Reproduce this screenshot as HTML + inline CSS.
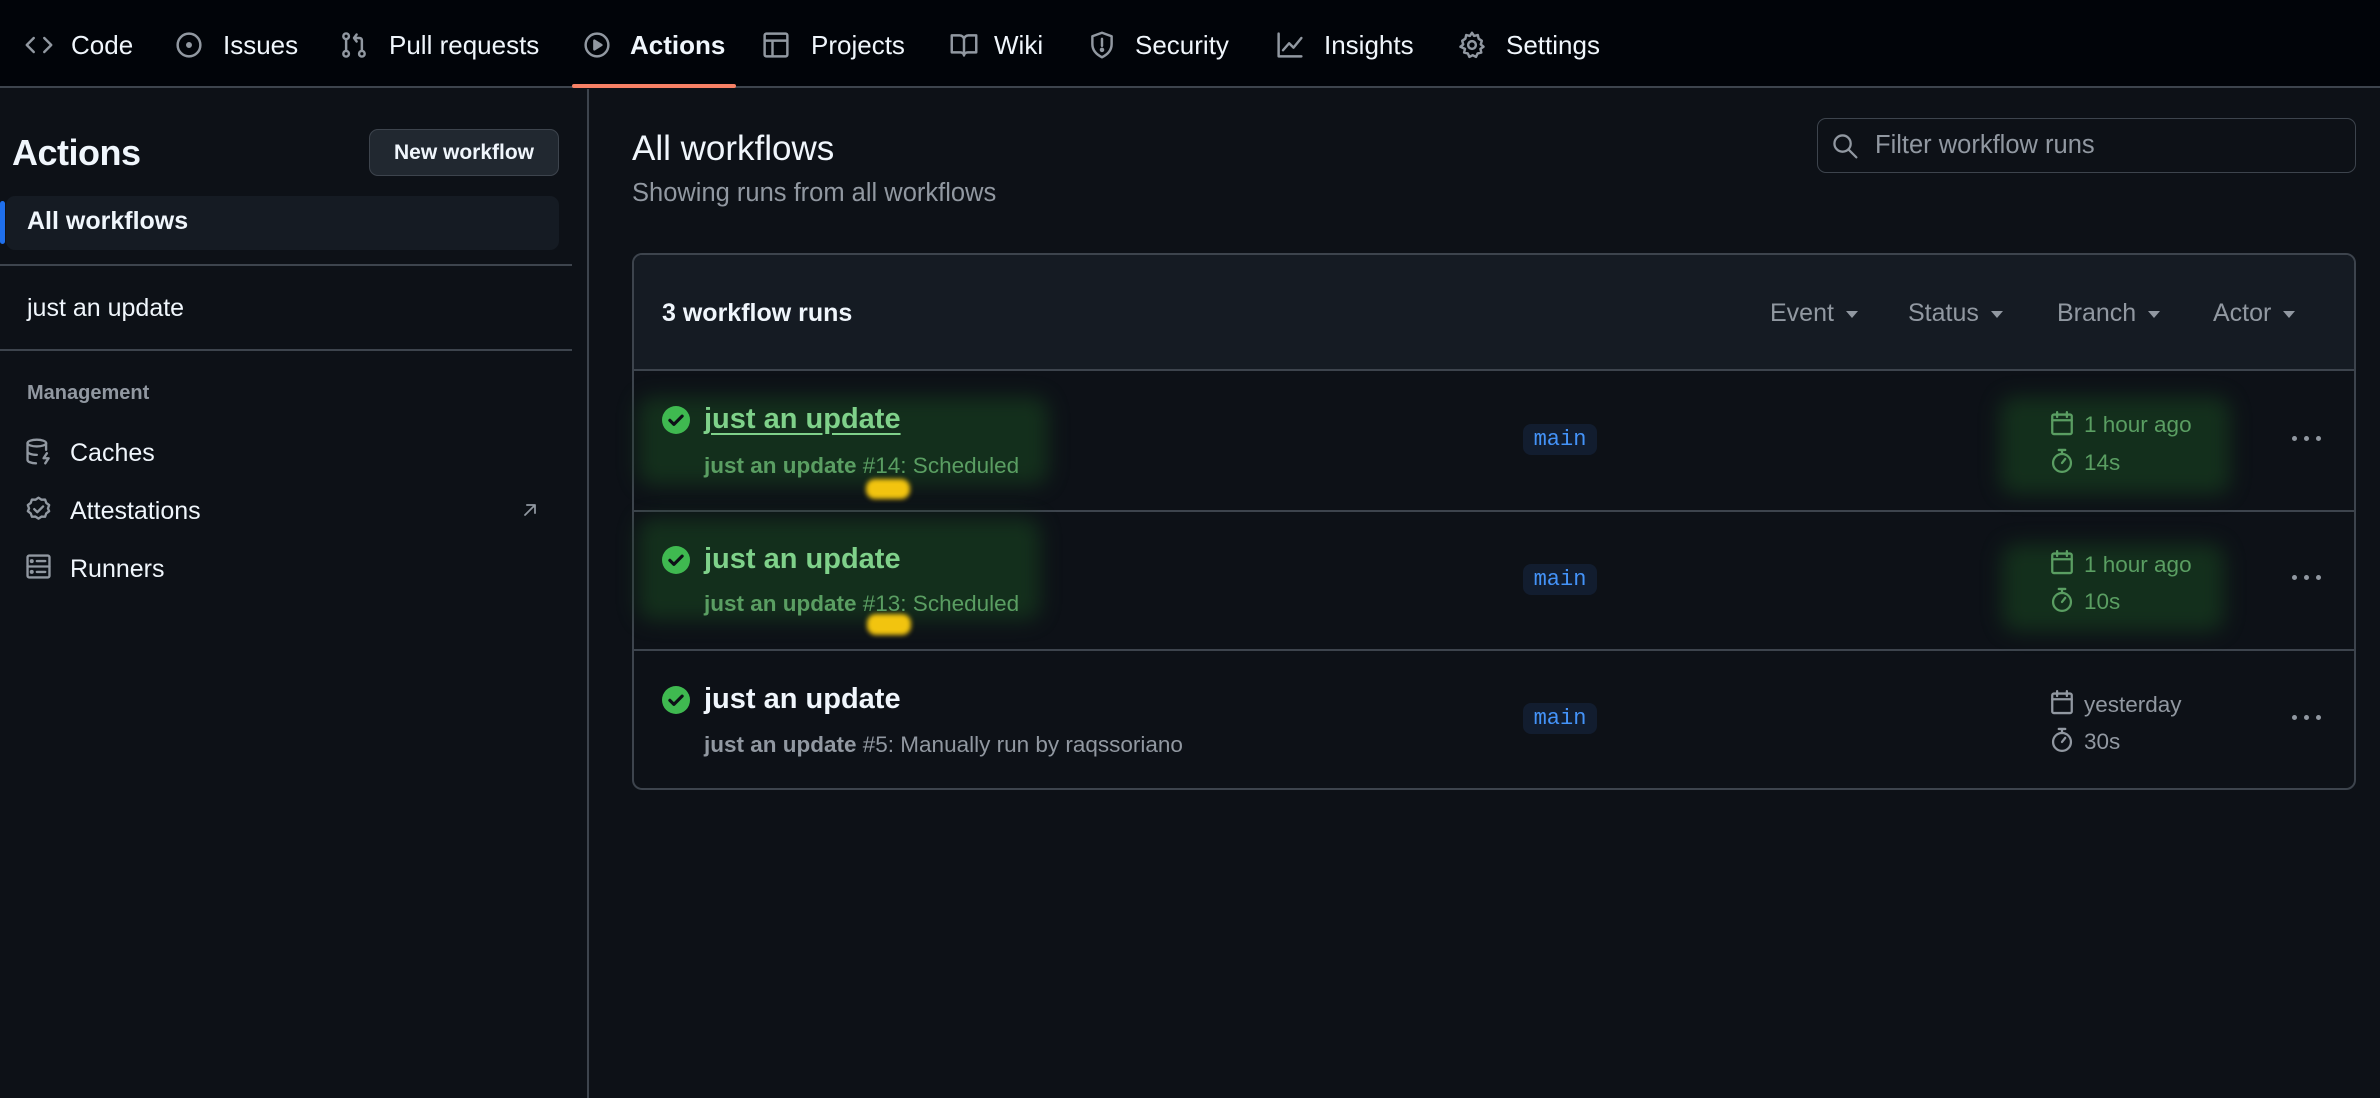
<!DOCTYPE html>
<html><head><meta charset="utf-8"><style>
*{margin:0;padding:0;box-sizing:border-box}
body{width:2380px;height:1098px;background:#0d1117;font-family:"Liberation Sans",sans-serif;color:#f0f6fc;position:relative;overflow:hidden}
.a{position:absolute;white-space:nowrap}
.nav{position:absolute;left:0;top:0;width:2380px;height:88px;background:#010409;border-bottom:2px solid #3d444d}
.ni{position:absolute;top:30px;font-size:26px;color:#f0f6fc;line-height:30px}
.ic{position:absolute;fill:none;stroke:#9198a1;stroke-width:1.4;stroke-linecap:round;stroke-linejoin:round}
.glow{position:absolute;background:#163a1e;filter:blur(10px);opacity:.75;border-radius:14px}
.badge{position:absolute;background:#121d2f;border-radius:8px;color:#4493f8;font-family:"Liberation Mono",monospace;font-size:22px;width:74px;height:31px;line-height:31px;text-align:center}
.dots{position:absolute;width:32px;height:6px}
.dots i{position:absolute;top:0;width:5px;height:5px;border-radius:50%;background:#9198a1}
.f{position:absolute;top:299px;font-size:25px;color:#9198a1}
.car{display:inline-block;border:6px solid transparent;border-top:7px solid #9198a1;border-bottom:0;margin-left:12px;vertical-align:middle}
.t{position:absolute;white-space:nowrap;font-size:29px;font-weight:bold}
.s{position:absolute;white-space:nowrap;font-size:22.5px}
</style></head><body>
<div class="nav"></div>
<svg class="ic" style="left:25px;top:31px" width="28" height="28" viewBox="0 0 16 16"><path d="M5 4L1 8l4 4M11 4l4 4-4 4"/></svg>
<div class="ni" style="left:71px">Code</div>
<svg class="ic" style="left:175px;top:31px" width="28" height="28" viewBox="0 0 16 16"><circle cx="8" cy="8" r="6.5"/><circle cx="8" cy="8" r="1" fill="#9198a1"/></svg>
<div class="ni" style="left:223px">Issues</div>
<svg class="ic" style="left:340px;top:31px" width="28" height="28" viewBox="0 0 16 16"><circle cx="3.5" cy="3" r="1.6"/><circle cx="3.5" cy="13" r="1.6"/><circle cx="12.5" cy="13" r="1.6"/><path d="M3.5 4.6v6.8M12.5 11.4V5.5c0-1-.5-1.5-1.5-1.5H8m1.5-2L8 4l1.5 2"/></svg>
<div class="ni" style="left:389px">Pull requests</div>
<svg class="ic" style="left:583px;top:31px" width="28" height="28" viewBox="0 0 16 16"><circle cx="8" cy="8" r="6.5"/><path d="M6.5 5.5v5l4-2.5z" fill="#9198a1"/></svg>
<div class="ni" style="left:630px;font-weight:bold">Actions</div>
<div class="a" style="left:572px;top:84px;width:164px;height:4px;background:#f78166;border-radius:2px"></div>
<svg class="ic" style="left:762px;top:31px" width="28" height="28" viewBox="0 0 16 16"><rect x="1.5" y="1.5" width="13" height="13" rx="1"/><path d="M1.5 5.5h13M6 5.5v9"/></svg>
<div class="ni" style="left:811px">Projects</div>
<svg class="ic" style="left:949px;top:31px" width="30" height="28" viewBox="0 0 16 16"><path d="M1 2.5h4.5c1.3 0 2.5 1 2.5 2.3V14c0-1-1-1.8-2.2-1.8H1zM15 2.5h-4.5C9.2 2.5 8 3.5 8 4.8V14c0-1 1-1.8 2.2-1.8H15z"/></svg>
<div class="ni" style="left:994px">Wiki</div>
<svg class="ic" style="left:1088px;top:31px" width="28" height="28" viewBox="0 0 16 16"><path d="M8 1l5.5 2v4.5c0 3.5-2.5 6-5.5 7.5-3-1.5-5.5-4-5.5-7.5V3z"/><path d="M8 4.5v4"/><circle cx="8" cy="10.8" r=".6" fill="#9198a1"/></svg>
<div class="ni" style="left:1135px">Security</div>
<svg class="ic" style="left:1275px;top:31px" width="30" height="28" viewBox="0 0 16 16"><path d="M1.5 1.5v13h13M4 11l3.5-4 2.5 2.5L14.5 4"/></svg>
<div class="ni" style="left:1324px">Insights</div>
<svg class="ic" style="left:1458px;top:31px" width="28" height="28" viewBox="0 0 16 16"><circle cx="8" cy="8" r="2.2"/><path d="M8 1l1.2 1.8 2.1-.5.5 2.1L13.6 5.6 13 7.7 14.6 9l-1.8 1.2.5 2.1-2.1.5-.9 2-1.9-1-1.9 1-.9-2-2.1-.5.5-2.1L1.4 9 3 7.7 2.4 5.6l1.8-1.2.5-2.1 2.1.5z"/></svg>
<div class="ni" style="left:1506px">Settings</div>

<div class="a" style="left:587px;top:89px;width:2px;height:1009px;background:#3d444d"></div>
<div class="a" style="left:12px;top:132px;font-size:36px;font-weight:bold;letter-spacing:-0.5px">Actions</div>
<div class="a" style="left:369px;top:129px;width:190px;height:47px;background:#212830;border:1px solid #3d444d;border-radius:9px;font-size:21px;font-weight:bold;text-align:center;line-height:45px">New workflow</div>
<div class="a" style="left:6px;top:196px;width:553px;height:54px;background:#151b23;border-radius:9px"></div>
<div class="a" style="left:0;top:201px;width:5px;height:43px;background:#1f6feb;border-radius:3px"></div>
<div class="a" style="left:27px;top:207px;font-size:25px;font-weight:bold">All workflows</div>
<div class="a" style="left:0;top:264px;width:572px;height:2px;background:#3d444d"></div>
<div class="a" style="left:27px;top:294px;font-size:25px">just an update</div>
<div class="a" style="left:0;top:349px;width:572px;height:2px;background:#3d444d"></div>
<div class="a" style="left:27px;top:382px;font-size:20px;font-weight:bold;color:#9198a1">Management</div>
<svg class="ic" style="left:25px;top:438px" width="27" height="27" viewBox="0 0 16 16"><ellipse cx="7" cy="3" rx="5.5" ry="2"/><path d="M1.5 3v10c0 1 2.2 2 5 2M12.5 3v4M1.5 8c0 1 2.2 2 5.5 2M13 9l-2 3h3l-2 3"/></svg>
<div class="a" style="left:70px;top:439px;font-size:25px">Caches</div>
<svg class="ic" style="left:25px;top:496px" width="27" height="27" viewBox="0 0 16 16"><path d="M8 1l1.8 1.2 2.1-.1.7 2 1.7 1.3-.7 2L14.3 9l-1.7 1.3-.7 2-2.1-.1L8 13.4l-1.8-1.2-2.1.1-.7-2L1.7 9l.7-1.6-.7-2 1.7-1.3.7-2 2.1.1z"/><path d="M5.5 7.8l1.8 1.8 3.4-3.4"/></svg>
<div class="a" style="left:70px;top:497px;font-size:25px">Attestations</div>
<svg class="ic" style="left:520px;top:500px" width="20" height="20" viewBox="0 0 16 16"><path d="M4 12L12 4M5.5 4H12v6.5"/></svg>
<svg class="ic" style="left:25px;top:553px" width="27" height="27" viewBox="0 0 16 16"><rect x="1.5" y="1.5" width="13" height="13" rx="1"/><path d="M1.5 8h13M7 4.8h5M7 11.2h5"/><circle cx="4" cy="4.8" r=".5" fill="#9198a1"/><circle cx="4" cy="11.2" r=".5" fill="#9198a1"/></svg>
<div class="a" style="left:70px;top:555px;font-size:25px">Runners</div>

<div class="a" style="left:632px;top:129px;font-size:35px">All workflows</div>
<div class="a" style="left:632px;top:179px;font-size:25.5px;color:#9198a1">Showing runs from all workflows</div>
<div class="a" style="left:1817px;top:118px;width:539px;height:55px;background:#0d1117;border:1px solid #3d444d;border-radius:9px"></div>
<svg class="ic" style="left:1832px;top:133px" width="26" height="26" viewBox="0 0 16 16"><circle cx="6.5" cy="6.5" r="5"/><path d="M10.2 10.2L15 15"/></svg>
<div class="a" style="left:1875px;top:131px;font-size:25.5px;color:#9198a1">Filter workflow runs</div>

<div class="a" style="left:632px;top:253px;width:1724px;height:537px;border:2px solid #3d444d;border-radius:10px;overflow:hidden">
  <div style="height:116px;background:#151b23;border-bottom:2px solid #3d444d"></div>
  <div style="position:absolute;left:0;top:255px;width:100%;height:2px;background:#3d444d"></div>
  <div style="position:absolute;left:0;top:394px;width:100%;height:2px;background:#3d444d"></div>
</div>
<div class="a" style="left:662px;top:299px;font-size:25px;font-weight:bold">3 workflow runs</div>
<div class="f" style="left:1770px">Event<span class="car"></span></div>
<div class="f" style="left:1908px">Status<span class="car"></span></div>
<div class="f" style="left:2057px">Branch<span class="car"></span></div>
<div class="f" style="left:2213px">Actor<span class="car"></span></div>

<div class="glow" style="left:638px;top:397px;width:410px;height:88px"></div>
<div class="glow" style="left:2000px;top:397px;width:230px;height:97px"></div>
<div class="glow" style="left:638px;top:518px;width:402px;height:102px"></div>
<div class="glow" style="left:2002px;top:544px;width:222px;height:87px"></div>
<div class="a" style="left:866px;top:479px;width:44px;height:20px;background:#f2c40f;border-radius:9px;filter:blur(2.5px)"></div>
<div class="a" style="left:867px;top:614px;width:44px;height:21px;background:#f2c40f;border-radius:9px;filter:blur(2.5px)"></div>

<svg class="a" style="left:662px;top:406px" width="28" height="28" viewBox="0 0 16 16"><circle cx="8" cy="8" r="8" fill="#3fb950"/><path d="M4.5 8.2l2.3 2.3 4.7-4.7" fill="none" stroke="#0d1117" stroke-width="1.8" stroke-linecap="round" stroke-linejoin="round"/></svg>
<div class="t" style="left:704px;top:403px;color:#7fd18a;text-decoration:underline;text-underline-offset:5px">just an update</div>
<div class="s" style="left:704px;top:453px;color:#5a9e62"><b>just an update</b> #14: Scheduled</div>
<div class="badge" style="left:1523px;top:424px">main</div>
<svg class="ic" style="left:2049px;top:410px;stroke:#5a9e62" width="26" height="27" viewBox="0 0 16 16"><rect x="2" y="2.5" width="12" height="12" rx="1"/><path d="M2 6h12M5 1v3M11 1v3"/></svg>
<div class="a" style="left:2084px;top:412px;font-size:22.5px;color:#5a9e62">1 hour ago</div>
<svg class="ic" style="left:2049px;top:447px;stroke:#5a9e62" width="26" height="27" viewBox="0 0 16 16"><circle cx="8" cy="9.5" r="5.5"/><path d="M6 1.5h4M8 1.5v2.5M8 9.5l2-2.5"/></svg>
<div class="a" style="left:2084px;top:450px;font-size:22.5px;color:#5a9e62">14s</div>
<div class="dots" style="left:2292px;top:436px"><i style="left:0"></i><i style="left:12px"></i><i style="left:24px"></i></div>

<svg class="a" style="left:662px;top:546px" width="28" height="28" viewBox="0 0 16 16"><circle cx="8" cy="8" r="8" fill="#3fb950"/><path d="M4.5 8.2l2.3 2.3 4.7-4.7" fill="none" stroke="#0d1117" stroke-width="1.8" stroke-linecap="round" stroke-linejoin="round"/></svg>
<div class="t" style="left:704px;top:543px;color:#7fd18a">just an update</div>
<div class="s" style="left:704px;top:591px;color:#5a9e62"><b>just an update</b> #13: Scheduled</div>
<div class="badge" style="left:1523px;top:564px">main</div>
<svg class="ic" style="left:2049px;top:549px;stroke:#5a9e62" width="26" height="27" viewBox="0 0 16 16"><rect x="2" y="2.5" width="12" height="12" rx="1"/><path d="M2 6h12M5 1v3M11 1v3"/></svg>
<div class="a" style="left:2084px;top:552px;font-size:22.5px;color:#5a9e62">1 hour ago</div>
<svg class="ic" style="left:2049px;top:586px;stroke:#5a9e62" width="26" height="27" viewBox="0 0 16 16"><circle cx="8" cy="9.5" r="5.5"/><path d="M6 1.5h4M8 1.5v2.5M8 9.5l2-2.5"/></svg>
<div class="a" style="left:2084px;top:589px;font-size:22.5px;color:#5a9e62">10s</div>
<div class="dots" style="left:2292px;top:575px"><i style="left:0"></i><i style="left:12px"></i><i style="left:24px"></i></div>

<svg class="a" style="left:662px;top:686px" width="28" height="28" viewBox="0 0 16 16"><circle cx="8" cy="8" r="8" fill="#3fb950"/><path d="M4.5 8.2l2.3 2.3 4.7-4.7" fill="none" stroke="#0d1117" stroke-width="1.8" stroke-linecap="round" stroke-linejoin="round"/></svg>
<div class="t" style="left:704px;top:683px">just an update</div>
<div class="s" style="left:704px;top:732px;color:#9198a1"><b>just an update</b> #5: Manually run by raqssoriano</div>
<div class="badge" style="left:1523px;top:703px">main</div>
<svg class="ic" style="left:2049px;top:689px" width="26" height="27" viewBox="0 0 16 16"><rect x="2" y="2.5" width="12" height="12" rx="1"/><path d="M2 6h12M5 1v3M11 1v3"/></svg>
<div class="a" style="left:2084px;top:692px;font-size:22.5px;color:#9198a1">yesterday</div>
<svg class="ic" style="left:2049px;top:726px" width="26" height="27" viewBox="0 0 16 16"><circle cx="8" cy="9.5" r="5.5"/><path d="M6 1.5h4M8 1.5v2.5M8 9.5l2-2.5"/></svg>
<div class="a" style="left:2084px;top:729px;font-size:22.5px;color:#9198a1">30s</div>
<div class="dots" style="left:2292px;top:715px"><i style="left:0"></i><i style="left:12px"></i><i style="left:24px"></i></div>
</body></html>
